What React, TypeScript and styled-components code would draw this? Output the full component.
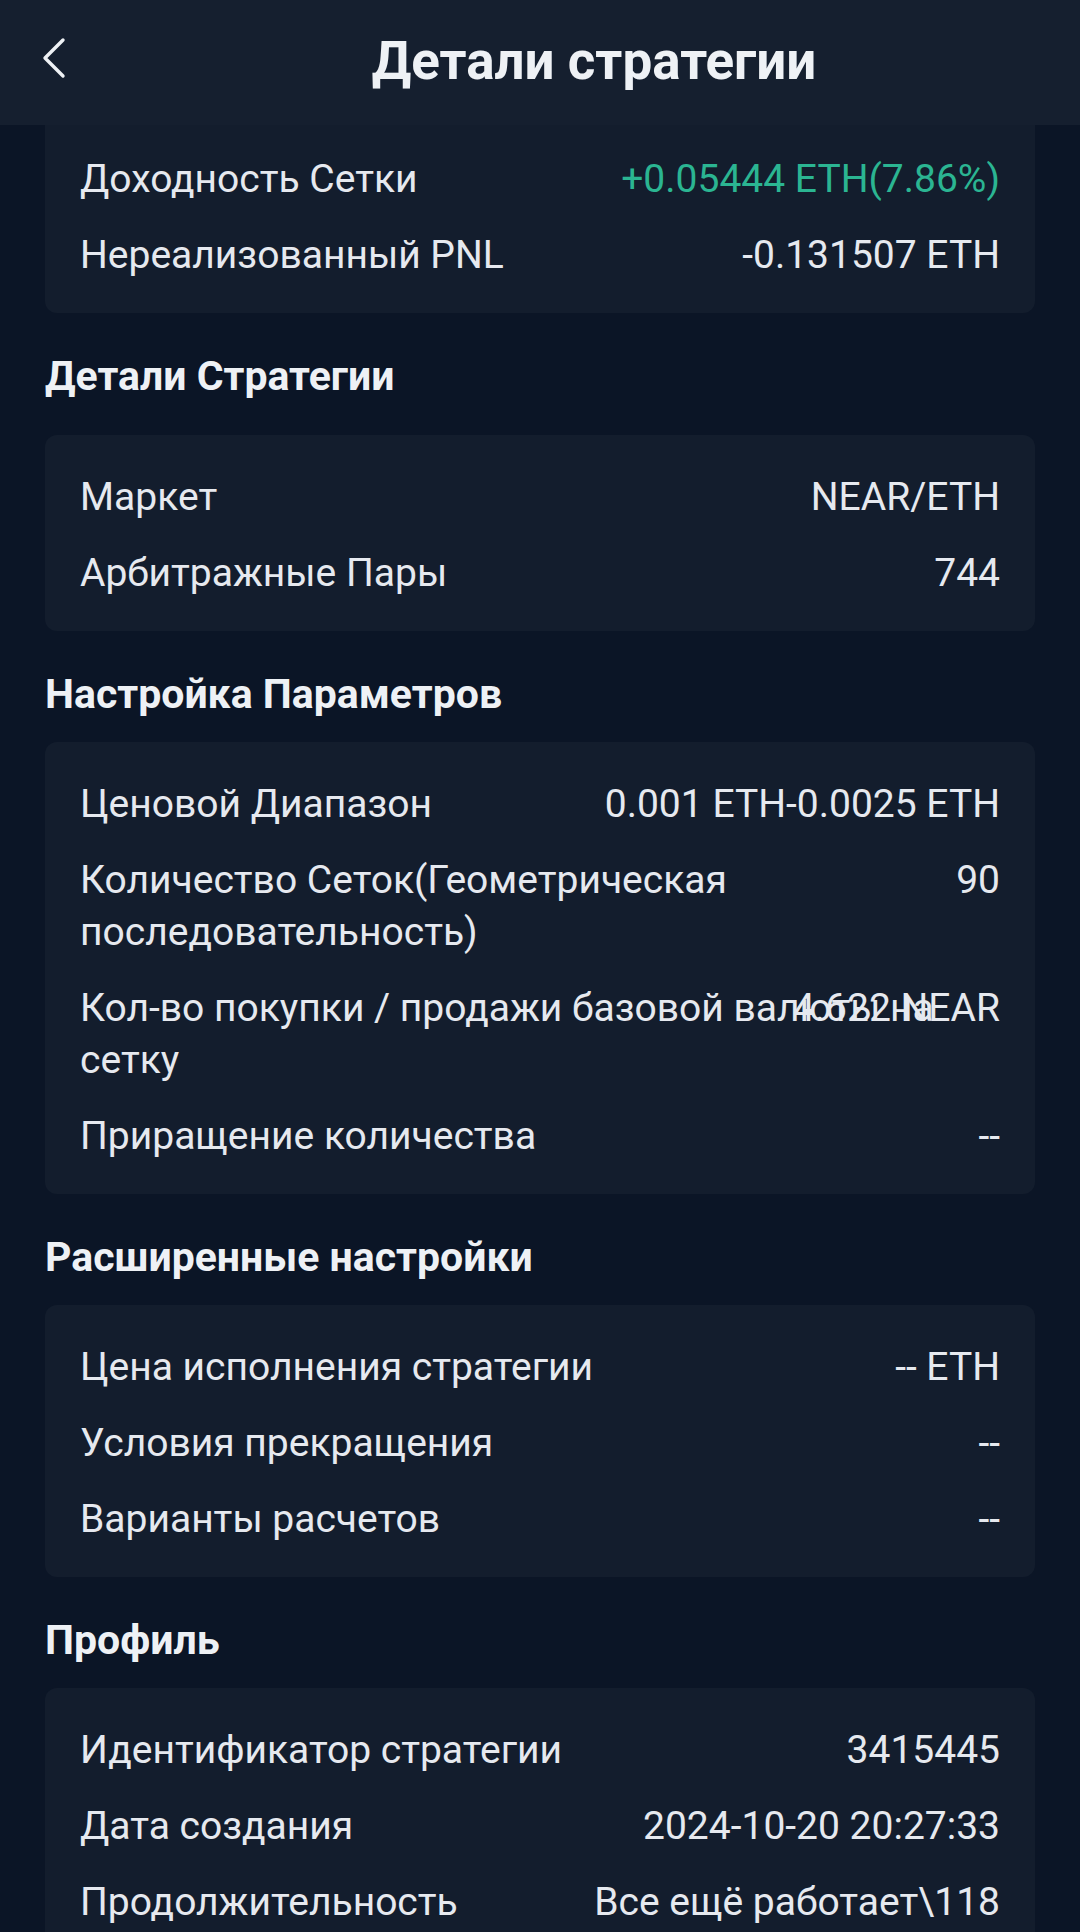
import styled, { createGlobalStyle } from "styled-components";

const GlobalStyle = createGlobalStyle`
    html, body {
        margin: 0;
        padding: 0;
        background: #0b1526;
    }
    body {
        font-family: Roboto, "Noto Sans", "Liberation Sans", sans-serif;
        color: #e6e9ef;
    }
`;

type Item = { label: string; value: string; green?: boolean };

const income: Item[] = [
    { label: "Доходность Сетки", value: "+0.05444 ETH(7.86%)", green: true },
    { label: "Нереализованный PNL", value: "-0.131507 ETH" },
];

const sections: { title: string; gap?: number; items: Item[] }[] = [
    {
        title: "Детали Стратегии",
        gap: 33,
        items: [
            { label: "Маркет", value: "NEAR/ETH" },
            { label: "Арбитражные Пары", value: "744" },
        ],
    },
    {
        title: "Настройка Параметров",
        items: [
            { label: "Ценовой Диапазон", value: "0.001 ETH-0.0025 ETH" },
            { label: "Количество Сеток(Геометрическая последовательность)", value: "90" },
            { label: "Кол-во покупки / продажи базовой валюты на сетку", value: "4.622 NEAR" },
            { label: "Приращение количества", value: "--" },
        ],
    },
    {
        title: "Расширенные настройки",
        items: [
            { label: "Цена исполнения стратегии", value: "-- ETH" },
            { label: "Условия прекращения", value: "--" },
            { label: "Варианты расчетов", value: "--" },
        ],
    },
    {
        title: "Профиль",
        items: [
            { label: "Идентификатор стратегии", value: "3415445" },
            { label: "Дата создания", value: "2024-10-20 20:27:33" },
            { label: "Продолжительность", value: "Все ещё работает\\118" },
        ],
    },
];

export default function App() {
    return (
        <Screen>
            <GlobalStyle />
            <Header>
                <BackButton aria-label="back">
                    <svg width="26" height="44" viewBox="0 0 26 44" fill="none">
                        <path d="M22 4 L4 22 L22 40" stroke="#eef1f5" strokeWidth="3.4" strokeLinecap="round" strokeLinejoin="round" />
                    </svg>
                </BackButton>
                <HeaderTitle>Детали стратегии</HeaderTitle>
            </Header>

            <Card $clipped>
                {income.map((it) => (
                    <Row key={it.label}>
                        <Label>{it.label}</Label>
                        <Value $green={it.green}>{it.value}</Value>
                    </Row>
                ))}
            </Card>

            {sections.map((s) => (
                <Section key={s.title}>
                    <SectionTitle $gap={s.gap}>{s.title}</SectionTitle>
                    <Card>
                        {s.items.map((it) => (
                            <Row key={it.label}>
                                <Label>{it.label}</Label>
                                <Value $green={it.green}>{it.value}</Value>
                            </Row>
                        ))}
                    </Card>
                </Section>
            ))}
        </Screen>
    );
}

const Screen = styled.div`
    width: 1080px;
    height: 1932px;
    overflow: hidden;
    background: #0b1526;
`;

const Header = styled.header`
    height: 125px;
    background: #151f2f;
    display: flex;
    align-items: center;
`;

const BackButton = styled.button`
    width: 108px;
    height: 100%;
    padding: 0 0 10px 41px;
    display: flex;
    align-items: center;
    background: none;
    border: none;
`;

const HeaderTitle = styled.h1`
    flex: 1;
    margin: 0 0 4px;
    text-align: center;
    font-size: 53px;
    font-weight: 700;
    color: #eef1f5;
`;

const Section = styled.section`
    display: flex;
    flex-direction: column;
`;

const SectionTitle = styled.h2<{ $gap?: number }>`
    margin: 37px 45px ${(p) => p.$gap ?? 22}px;
    font-size: 41px;
    line-height: 52px;
    font-weight: 700;
    color: #eef1f5;
`;

const Card = styled.div<{ $clipped?: boolean }>`
    margin: 0 45px;
    padding: ${(p) => (p.$clipped ? "28px" : "36px")} 35px 32px;
    background: #131d2d;
    border-radius: ${(p) => (p.$clipped ? "0 0 12px 12px" : "12px")};
    display: flex;
    flex-direction: column;
    gap: 24px;
`;

const Row = styled.div`
    display: grid;
    grid-template-columns: 1fr;
    font-size: 39px;
    line-height: 52px;
`;

const Label = styled.span`
    grid-area: 1 / 1;
    max-width: calc(100% - 40px);
    color: #e6e9ef;
`;

const Value = styled.span<{ $green?: boolean }>`
    grid-area: 1 / 1;
    justify-self: end;
    align-self: start;
    white-space: nowrap;
    color: ${(p) => (p.$green ? "#2bb592" : "#e6e9ef")};
`;
